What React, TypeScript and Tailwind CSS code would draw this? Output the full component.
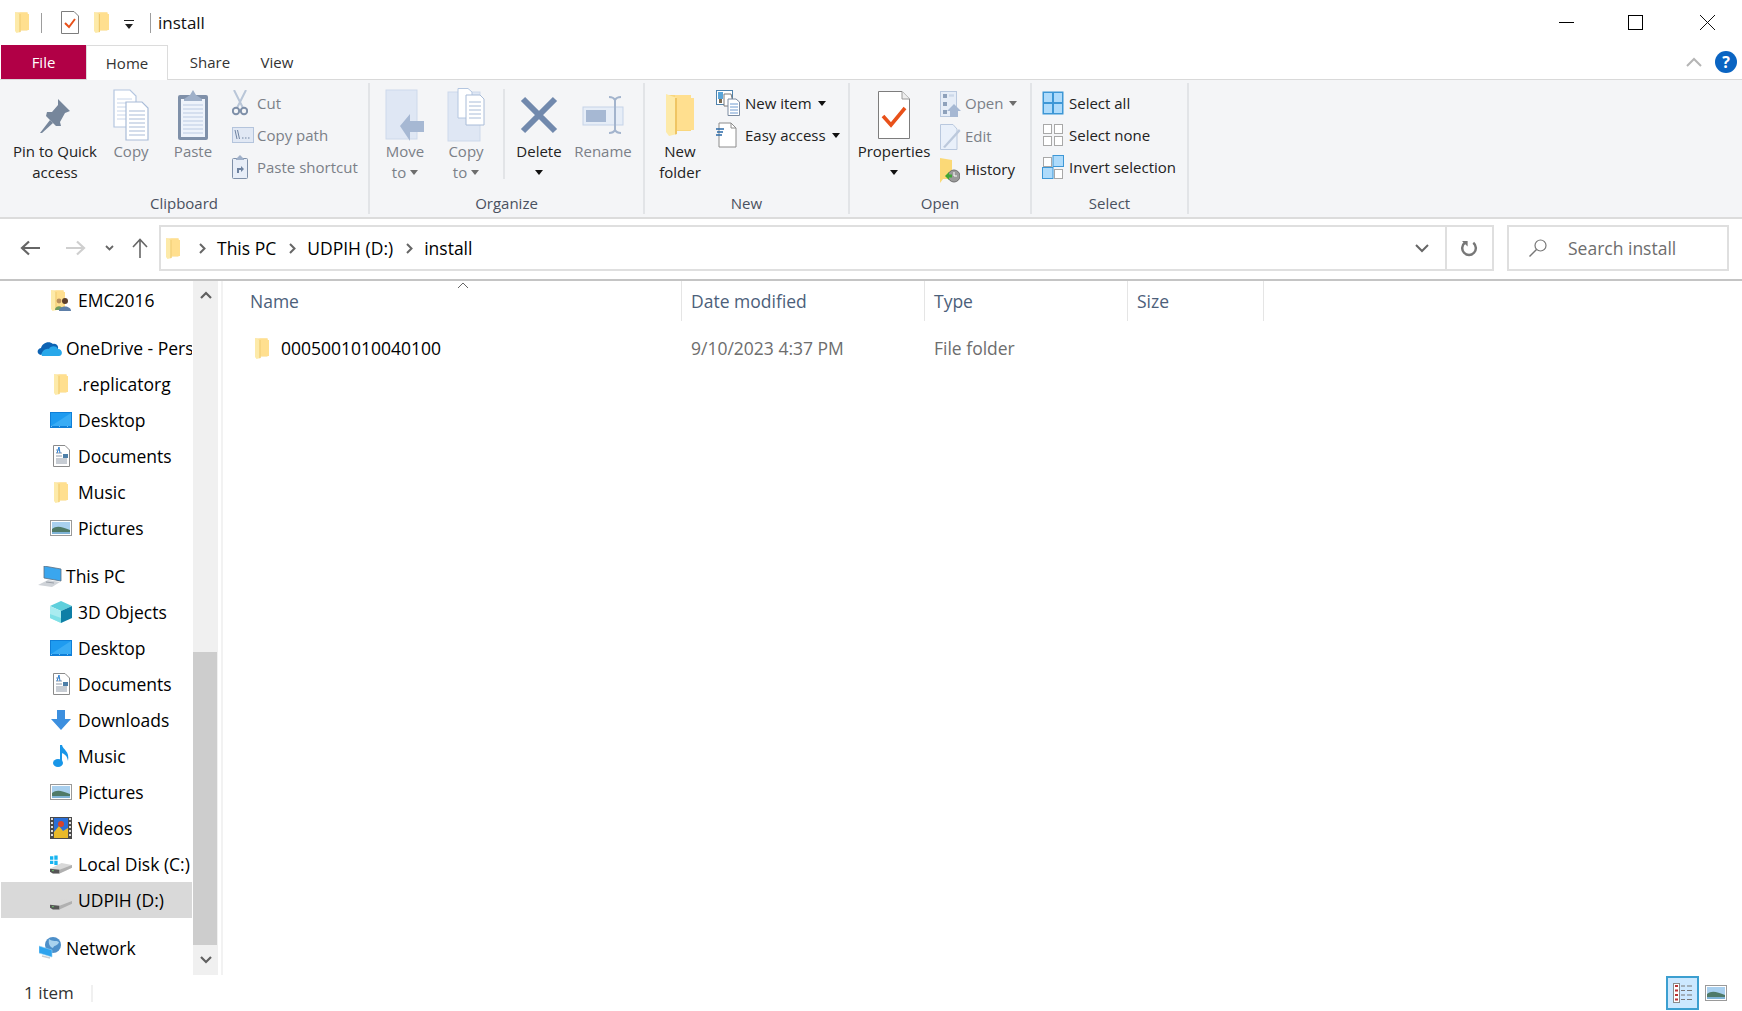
import type { ReactNode } from 'react';

const sans = "font-['Open_Sans',sans-serif]";

function Folder({ className = 'w-[14px] h-[21px]' }: { className?: string }) {
  return (
    <svg viewBox="0 0 28 42" className={className} preserveAspectRatio="none">
      <path d="M0 1 H25 V37 H7 L0 33 Z" fill="#f9d77e" />
      <path d="M9 1 H25 V4 H28 V36 H9 Z" fill="#ffdf8f" />
      <path d="M0 0 L11 4 V40 L3 42 L0 38 Z" fill="#fdeaa9" />
      <path d="M11 4 V40 L9 40.5 V4 Z" fill="#efc564" />
    </svg>
  );
}

function Caret({ dim = false }: { dim?: boolean }) {
  return (
    <svg viewBox="0 0 8 5" className="w-[8px] h-[5px] shrink-0">
      <path d="M0 0H8L4 5Z" fill={dim ? '#6d6d6d' : '#111'} />
    </svg>
  );
}

const PinIcon = () => (
  <svg viewBox="0 0 32 38" className="w-[32px] h-[38px]">
    <path d="M19 3 L31 15 L26 17 L21 26 L22 30 L17 30 L7 20 L8 16 L13 16 L19 9 Z" fill="#76869b" />
    <path d="M11 24 L1 37 L3 37 L14 27 Z" fill="#76869b" />
  </svg>
);

const CopyIcon = () => (
  <svg viewBox="0 0 36 52" className="w-[36px] h-[52px]">
    <path d="M1 1H17L23 7V38H1Z" fill="#fff" stroke="#b4c6e0" strokeWidth="1.2" />
    <path d="M4 10H19M4 14H19M4 18H19M4 22H19M4 26H19M4 30H19" stroke="#c9d6ea" strokeWidth="1" />
    <path d="M13 13H29L35 19V51H13Z" fill="#fff" stroke="#a9bcd8" strokeWidth="1.2" />
    <path d="M16 22H32M16 26H32M16 30H32M16 34H32M16 38H32M16 42H32M16 46H32" stroke="#a9bcd8" strokeWidth="1.1" />
  </svg>
);

const PasteIcon = () => (
  <svg viewBox="0 0 32 52" className="w-[32px] h-[52px]">
    <rect x="1" y="6" width="30" height="45" rx="2" fill="#7f90a9" />
    <rect x="4" y="10" width="24" height="38" fill="#eef3fb" />
    <path d="M6 16H26M6 20H26M6 24H26M6 28H26M6 32H26M6 36H26M6 40H26M6 44H26" stroke="#bccbe3" strokeWidth="1" />
    <path d="M7 10 L13 6 L16 1 L19 6 L25 10 V12 H7 Z" fill="#9fb0c9" />
  </svg>
);

const CutIcon = () => (
  <svg viewBox="0 0 16 26" className="w-[16px] h-[26px]">
    <path d="M2 0 L11 18 M14 0 L5 18" stroke="#b9c6d8" strokeWidth="2" />
    <circle cx="4" cy="21" r="3.2" fill="none" stroke="#7f90a9" strokeWidth="2" />
    <circle cx="12" cy="21" r="3.2" fill="none" stroke="#7f90a9" strokeWidth="2" />
  </svg>
);

const CopyPathIcon = () => (
  <svg viewBox="0 0 22 16" className="w-[22px] h-[16px]">
    <rect x="0.5" y="0.5" width="21" height="15" fill="#e1e8f4" stroke="#b4c4dc" />
    <path d="M3 3 L5 12 M5.5 3 L7.5 12" stroke="#6f83a1" strokeWidth="1" />
    <path d="M10 11H11.5M13 11H14.5M16 11H17.5" stroke="#6f83a1" strokeWidth="1" />
  </svg>
);

const PasteShortcutIcon = () => (
  <svg viewBox="0 0 16 24" className="w-[16px] h-[24px]">
    <rect x="0.5" y="3.5" width="15" height="20" rx="1" fill="#e8eef8" stroke="#7f90a9" />
    <path d="M4 4 L8 0 L12 4 V5 H4 Z" fill="#9fb0c9" />
    <path d="M5 18 V13 H9 V11 L12 14 L9 17 V15 H7 V18 Z" fill="#6f83a1" />
  </svg>
);

const MoveToIcon = () => (
  <svg viewBox="0 0 40 52" className="w-[40px] h-[52px]">
    <rect x="1" y="1" width="31" height="49" fill="#dfe7f4" stroke="#cdd9eb" />
    <path d="M15 37 L25 25 V32 H39 V43 H25 V52 Z" fill="#a6b8d3" />
  </svg>
);

const CopyToIcon = () => (
  <svg viewBox="0 0 38 54" className="w-[38px] h-[54px]">
    <rect x="1" y="4" width="32" height="49" fill="#dfe7f4" stroke="#cdd9eb" />
    <path d="M11 0.5H21L25 4V30H11Z" fill="#fff" stroke="#b4c6e0" />
    <path d="M19 7H33L37 11V37H19Z" fill="#fff" stroke="#a9bcd8" />
    <path d="M22 14H34M22 18H34M22 22H34M22 26H34M22 30H34" stroke="#a9bcd8" />
  </svg>
);

const DeleteIcon = () => (
  <svg viewBox="0 0 38 38" className="w-[38px] h-[38px]">
    <path d="M3 3 L35 35 M35 3 L3 35" stroke="#7189ad" strokeWidth="6" />
  </svg>
);

const RenameIcon = () => (
  <svg viewBox="0 0 42 38" className="w-[42px] h-[38px]">
    <rect x="1" y="11" width="40" height="18" fill="#e6edf7" stroke="#c5d3e8" />
    <rect x="4" y="14" width="20" height="12" fill="#a6b8d3" />
    <path d="M27 1 C30 1 32 2 33 4 C34 2 36 1 39 1 M33 4 V34 M27 37 C30 37 32 36 33 34 C34 36 36 37 39 37" stroke="#a3b4cd" strokeWidth="2" fill="none" />
  </svg>
);

const NewItemIcon = () => (
  <svg viewBox="0 0 24 26" className="w-[24px] h-[26px]">
    <rect x="0.5" y="0.5" width="16" height="14" fill="#fff" stroke="#4f83ad" />
    <rect x="2" y="2" width="5" height="7" fill="#5aa5d8" />
    <rect x="3" y="9" width="3" height="4" fill="#7a6a50" />
    <path d="M8 4H15L16 8V16H8Z" fill="#fff" stroke="#7a7a7a" />
    <path d="M12 9H20L23.5 12V25.5H12Z" fill="#fff" stroke="#7a8aa0" />
    <path d="M14 14H22M14 17H22M14 20H22M14 23H22" stroke="#6f9ad0" />
  </svg>
);

const EasyAccessIcon = () => (
  <svg viewBox="0 0 21 26" className="w-[21px] h-[26px]">
    <path d="M3 1H15L20 6V25H3Z" fill="#fff" stroke="#8c8c8c" />
    <path d="M15 1V6H20" fill="none" stroke="#8c8c8c" />
    <path d="M0 7H8M1 10H7M0 13H6" stroke="#2a6aa8" strokeWidth="1.4" />
  </svg>
);

const PropertiesIcon = () => (
  <svg viewBox="0 0 32 48" className="w-[32px] h-[48px]">
    <path d="M0.5 0.5H24L31.5 8V47.5H0.5Z" fill="#fff" stroke="#7d7d7d" />
    <path d="M24 0.5V8H31.5" fill="#eee" stroke="#9a9a9a" />
    <path d="M5 25 L13 34 L27 17" fill="none" stroke="#e8511a" strokeWidth="3.6" />
  </svg>
);

const OpenIcon = () => (
  <svg viewBox="0 0 21 26" className="w-[21px] h-[26px]">
    <rect x="0.5" y="0.5" width="16" height="25" fill="#e6edf7" stroke="#b9c8de" />
    <path d="M3 3H7V7H3ZM3 11H7V15H3ZM3 19H7V23H3Z" fill="#8ea1bb" />
    <path d="M9 4H14M9 5H14" stroke="#c3d1e4" />
    <path d="M14 13 L21 20 H18 V26 H10 V20 H7 Z" fill="#a6b8d3" />
  </svg>
);

const EditIcon = () => (
  <svg viewBox="0 0 21 26" className="w-[21px] h-[26px]">
    <path d="M0.5 0.5H13L17 5V25.5H0.5Z" fill="#e9f0fa" stroke="#b9c8de" />
    <path d="M3 23 L19 5 L20.5 7 L5 24 Z" fill="#bcc9dc" />
  </svg>
);

const HistoryIcon = () => (
  <svg viewBox="0 0 20 26" className="w-[20px] h-[26px]">
    <path d="M0 1 L12 3 V22 H3 L0 26 Z" fill="#fbd977" />
    <circle cx="14" cy="19" r="6" fill="#9a9a9a" stroke="#6f6f6f" />
    <path d="M14 15 V19 H17" stroke="#fff" strokeWidth="1" fill="none" />
    <path d="M5 19 L9 15 V17.5 H12 V20.5 H9 V23 Z" fill="#3fa535" />
  </svg>
);

const SelectAllIcon = () => (
  <svg viewBox="0 0 22 24" className="w-[22px] h-[24px]">
    <rect x="0.5" y="0.5" width="21" height="23" fill="#3d97d6" />
    <rect x="2" y="2" width="8" height="9" fill="#aedbfb" />
    <rect x="12" y="2" width="8" height="9" fill="#aedbfb" />
    <rect x="2" y="13" width="8" height="9" fill="#aedbfb" />
    <rect x="12" y="13" width="8" height="9" fill="#aedbfb" />
  </svg>
);

const SelectNoneIcon = () => (
  <svg viewBox="0 0 22 24" className="w-[22px] h-[24px]">
    <rect x="1.5" y="1.5" width="8" height="9" fill="#fff" stroke="#a8a8a8" />
    <rect x="12.5" y="1.5" width="8" height="9" fill="#fff" stroke="#a8a8a8" />
    <rect x="1.5" y="13.5" width="8" height="9" fill="#fff" stroke="#a8a8a8" />
    <rect x="12.5" y="13.5" width="8" height="9" fill="#fff" stroke="#a8a8a8" />
  </svg>
);

const InvertIcon = () => (
  <svg viewBox="0 0 22 24" className="w-[22px] h-[24px]">
    <rect x="1.5" y="2.5" width="8" height="9" fill="#fff" stroke="#a8a8a8" />
    <rect x="11" y="0.5" width="10.5" height="11" fill="#aedbfb" stroke="#3d97d6" />
    <rect x="0.5" y="12.5" width="10.5" height="11" fill="#aedbfb" stroke="#3d97d6" />
    <rect x="12.5" y="14.5" width="8" height="9" fill="#fff" stroke="#a8a8a8" />
  </svg>
);

const CloudIcon = () => (
  <svg viewBox="0 0 25 15" className="w-[25px] h-[15px]">
    <path d="M4 14 C0 14 -1 8 4 7 C5 2 12 -1 16 3 C18 2 22 4 21 8 H12 Z" fill="#0d63b3" />
    <path d="M5 15 H22 C26 15 26 8 21 8 C19 4 13 5 12 8 C8 7 3 12 5 15Z" fill="#28a8ea" />
  </svg>
);

const DesktopIcon = () => (
  <svg viewBox="0 0 22 16" className="w-[22px] h-[16px]">
    <rect width="22" height="16" fill="#0f7fd8" />
    <path d="M1 1H21V14L1 14Z" fill="#1e9bf0" />
    <path d="M1 14 L21 1 V14Z" fill="#39acf5" />
    <path d="M1 14.5H21" stroke="#cfe9fb" strokeWidth="0.6" strokeDasharray="1 7" />
  </svg>
);

const DocumentsIcon = () => (
  <svg viewBox="0 0 17 22" className="w-[17px] h-[22px]">
    <path d="M0.5 0.5H12L16.5 5V21.5H0.5Z" fill="#fff" stroke="#8a8a8a" />
    <path d="M3 5H6M3 8H9M11 10H14M3 11H9M3 14H14M3 16H14M3 18H14" stroke="#8f9aa8" strokeWidth="1" />
    <path d="M4 8 L6 2 L7 8" stroke="#2a7fd4" fill="none" />
    <rect x="10" y="9" width="5" height="4" fill="#4d7fa8" />
  </svg>
);

const PicturesIcon = () => (
  <svg viewBox="0 0 22 16" className="w-[22px] h-[16px]">
    <rect x="0.5" y="0.5" width="21" height="15" fill="#fff" stroke="#9a9a9a" />
    <rect x="2" y="2" width="18" height="12" fill="#a9d0ef" />
    <path d="M2 9 C7 5 12 7 20 10 V14 H2Z" fill="#4f7a68" />
    <path d="M2 12 H20 V14 H2Z" fill="#7fb3d6" />
  </svg>
);

const PeopleFolderIcon = () => (
  <div className="relative w-[20px] h-[21px]">
    <Folder className="w-[14px] h-[21px]" />
    <svg viewBox="0 0 20 21" className="w-[20px] h-[21px] absolute left-0 top-0">
      <circle cx="8" cy="11" r="2.4" fill="#b98f5e" />
      <path d="M4 20 C4 15 12 15 12 20Z" fill="#6f9a5f" />
      <circle cx="14" cy="11" r="3" fill="#5c3f2b" />
      <path d="M8 21 C8 15 20 15 20 21Z" fill="#5d7fa8" />
    </svg>
  </div>
);

const ThisPcIcon = () => (
  <svg viewBox="0 0 24 21" className="w-[24px] h-[21px]">
    <path d="M6 0 L23 3 V15 L6 12 Z" fill="#3aa6ee" stroke="#5d6e80" strokeWidth="0.8" />
    <path d="M0 19 L10 14 L22 16 L14 21 Z" fill="#cfd3d8" />
    <path d="M8 16 L16 17" stroke="#9aa0a8" />
  </svg>
);

const CubeIcon = () => (
  <svg viewBox="0 0 22 22" className="w-[22px] h-[22px]">
    <path d="M11 0 L22 5 L11 10 L0 5Z" fill="#5ecfdc" />
    <path d="M0 5 L11 10 V22 L0 17Z" fill="#a9ecf0" />
    <path d="M11 10 L22 5 V17 L11 22Z" fill="#0e7fa6" />
    <path d="M0 13 L11 17 V22 L0 17Z" fill="#7fe0e6" />
  </svg>
);

const DownloadsIcon = () => (
  <svg viewBox="0 0 20 20" className="w-[20px] h-[20px]">
    <path d="M6 0H14V9H20L10 20L0 9H6Z" fill="#3c8fdf" />
  </svg>
);

const MusicIcon = () => (
  <svg viewBox="0 0 17 22" className="w-[17px] h-[22px]">
    <ellipse cx="5" cy="18" rx="5" ry="4" fill="#1896e8" />
    <path d="M7 18 V0 H9 C10 5 17 6 15 16 C14 10 11 9 9 8 V18Z" fill="#1896e8" />
  </svg>
);

const VideosIcon = () => (
  <svg viewBox="0 0 22 22" className="w-[22px] h-[22px]">
    <rect width="22" height="22" fill="#4a4a4a" />
    <rect x="4" y="1" width="14" height="20" fill="#2a6fd8" />
    <path d="M4 15 L9 9 L13 14 L18 11 V21 H4Z" fill="#e8b92a" />
    <circle cx="11" cy="7" r="3" fill="#d8442a" />
    <path d="M1 2H3M1 6H3M1 10H3M1 14H3M1 18H3M19 2H21M19 6H21M19 10H21M19 14H21M19 18H21" stroke="#ddd" strokeWidth="2" />
  </svg>
);

const DriveIcon = ({ windows = false }: { windows?: boolean }) => (
  <svg viewBox="0 0 23 20" className="w-[23px] h-[20px]">
    {windows && <path d="M0 2H3.5V5.5H0ZM4.5 1H8V5.5H4.5ZM0 6.5H3.5V10H0ZM4.5 6.5H8V11H4.5Z" fill="#18b4f0" />}
    <path d="M0 15 L12 9 L23 11 V14 L10 20 H3 L0 18Z" fill="#d8d8d8" />
    <path d="M0 15 L10 16 V20 H3 L0 18Z" fill="#555" />
    <path d="M10 16 L23 11 V14 L10 20Z" fill="#b0b0b0" />
    <path d="M2 17H4" stroke="#6fce6f" strokeWidth="1" />
  </svg>
);

const NetworkIcon = () => (
  <svg viewBox="0 0 22 22" className="w-[22px] h-[22px]">
    <circle cx="14" cy="8" r="8" fill="#4d8fc9" />
    <path d="M10 2 C14 5 17 3 20 5 C19 9 15 8 14 11 C11 10 9 7 10 2Z" fill="#a8d2ee" />
    <path d="M0 9 L13 13 V20 L0 16 Z" fill="#2ea3ee" stroke="#8ed0f5" strokeWidth="0.6" />
    <path d="M3 19 L11 21" stroke="#c8ccd2" strokeWidth="1.6" />
  </svg>
);

function LargeButton({ icon, label, sub, width, ml = 0, dim = false, iconBox = 'h-[52px]' }: {
  icon: ReactNode; label: string; sub?: ReactNode; width: string; ml?: number; dim?: boolean; iconBox?: string;
}) {
  return (
    <div className={`flex flex-col items-center ${width} ${dim ? 'text-[#7b8088]' : 'text-[#222]'}`} style={{ marginLeft: ml }}>
      <div className={`flex items-center justify-center ${iconBox}`}>{icon}</div>
      <div className="h-[21px] leading-[21px] whitespace-nowrap">{label}</div>
      <div className="h-[21px] flex items-center justify-center gap-[4px] whitespace-nowrap">{sub}</div>
    </div>
  );
}

function SmallRow({ icon, label, dim = false, caret, gap = 'w-[25px]', h = 'h-[32px]' }: {
  icon: ReactNode; label: string; dim?: boolean; caret?: ReactNode; gap?: string; h?: string;
}) {
  return (
    <div className={`flex items-center ${h} whitespace-nowrap ${dim ? 'text-[#7b8088]' : 'text-[#222]'}`}>
      <div className={`${gap} flex items-center shrink-0`}>{icon}</div>
      <span>{label}</span>
      {caret && <span className="ml-[6px] flex items-center">{caret}</span>}
    </div>
  );
}

function RibbonGroup({ width, label, children }: { width: string; label: string; children: ReactNode }) {
  return (
    <div className={`${width} shrink-0 flex flex-col my-[3px] border-r-2 border-[#e2e4e7]`}>
      <div className="h-[110px] flex pt-[6px]">{children}</div>
      <div className="text-center text-[#4a5160] leading-[20px]">{label}</div>
    </div>
  );
}

function Ribbon() {
  return (
    <div className="h-[139px] bg-[#f4f5f7] border-b-2 border-[#dcdcdc] flex text-[15px] pl-0 shrink-0">
      <RibbonGroup width="w-[370px]" label="Clipboard">
        <LargeButton width="w-[90px]" ml={10} icon={<PinIcon />} label="Pin to Quick" sub="access" />
        <LargeButton width="w-[50px]" ml={6} dim icon={<CopyIcon />} label="Copy" />
        <LargeButton width="w-[50px]" ml={12} dim icon={<PasteIcon />} label="Paste" />
        <div className="ml-[14px] -mt-[2px]">
          <SmallRow dim icon={<CutIcon />} label="Cut" />
          <SmallRow dim icon={<CopyPathIcon />} label="Copy path" />
          <SmallRow dim icon={<PasteShortcutIcon />} label="Paste shortcut" />
        </div>
      </RibbonGroup>
      <RibbonGroup width="w-[275px]" label="Organize">
        <LargeButton width="w-[50px]" ml={10} dim icon={<MoveToIcon />} label="Move" sub={<>to <Caret dim /></>} />
        <LargeButton width="w-[50px]" ml={11} dim icon={<CopyToIcon />} label="Copy" sub={<>to <Caret dim /></>} />
        <div className="w-[2px] h-[90px] bg-[#e2e4e7] ml-[12px]" />
        <LargeButton width="w-[50px]" ml={9} icon={<DeleteIcon />} label="Delete" sub={<Caret />} />
        <LargeButton width="w-[60px]" ml={9} dim icon={<RenameIcon />} label="Rename" />
      </RibbonGroup>
      <RibbonGroup width="w-[205px]" label="New">
        <LargeButton width="w-[50px]" ml={10} icon={<Folder className="w-[28px] h-[42px]" />} label="New" sub="folder" />
        <div className="ml-[11px] -mt-[2px]">
          <SmallRow icon={<NewItemIcon />} gap="w-[29px]" label="New item" caret={<Caret />} />
          <SmallRow icon={<EasyAccessIcon />} gap="w-[29px]" label="Easy access" caret={<Caret />} />
        </div>
      </RibbonGroup>
      <RibbonGroup width="w-[182px]" label="Open">
        <LargeButton width="w-[76px]" ml={6} icon={<PropertiesIcon />} label="Properties" sub={<Caret />} />
        <div className="ml-[8px] -mt-[2px]">
          <SmallRow dim h="h-[33px]" icon={<OpenIcon />} label="Open" caret={<Caret dim />} />
          <SmallRow dim h="h-[33px]" icon={<EditIcon />} label="Edit" />
          <SmallRow h="h-[33px]" icon={<HistoryIcon />} label="History" />
        </div>
      </RibbonGroup>
      <RibbonGroup width="w-[157px]" label="Select">
        <div className="ml-[10px] -mt-[2px]">
          <SmallRow gap="w-[27px]" icon={<SelectAllIcon />} label="Select all" />
          <SmallRow gap="w-[27px]" icon={<SelectNoneIcon />} label="Select none" />
          <SmallRow gap="w-[27px]" icon={<InvertIcon />} label="Invert selection" />
        </div>
      </RibbonGroup>
    </div>
  );
}

function TitleBar() {
  return (
    <div className="h-[45px] flex items-center shrink-0">
      <div className="ml-[15px]"><Folder className="w-[14px] h-[21px]" /></div>
      <div className="w-px h-[20px] bg-[#9d9d9d] ml-[12px]" />
      <svg viewBox="0 0 18 23" className="w-[18px] h-[23px] ml-[19px]">
        <path d="M0.5 0.5H13L17.5 5V22.5H0.5Z" fill="#fff" stroke="#7d7d7d" />
        <path d="M4 12 L8 16 L14 8" fill="none" stroke="#e8511a" strokeWidth="2" />
      </svg>
      <div className="ml-[15px]"><Folder className="w-[15px] h-[21px]" /></div>
      <svg viewBox="0 0 10 9" className="w-[10px] h-[9px] ml-[15px] mt-[4px]">
        <path d="M0 0.5H10" stroke="#222" />
        <path d="M1 4H9L5 9Z" fill="#222" />
      </svg>
      <div className="w-px h-[20px] bg-[#9d9d9d] ml-[16px]" />
      <div className="ml-[7px] text-[17px] text-[#111] leading-none">install</div>
      <div className="ml-auto flex items-center">
        <div className="w-[15px] h-px bg-black mr-[54px]" />
        <div className="w-[15px] h-[15px] border border-black mr-[57px]" />
        <svg viewBox="0 0 15 15" className="w-[15px] h-[15px] mr-[27px]">
          <path d="M0 0 L15 15 M15 0 L0 15" stroke="#111" strokeWidth="1" />
        </svg>
      </div>
    </div>
  );
}

function Tabs() {
  return (
    <div className="h-[35px] flex text-[15px] border-b border-[#d9d9d9] shrink-0 relative">
      <div className="w-[85px] ml-px bg-[#b10046] text-white flex items-center justify-center">File</div>
      <div className="w-[82px] -mb-px bg-[#fff] border-x border-t border-[#dcdcdc] flex items-center justify-center text-[#333]">Home</div>
      <div className="w-[84px] flex items-center justify-center text-[#333]">Share</div>
      <div className="w-[50px] flex items-center justify-center text-[#333]">View</div>
      <div className="ml-auto flex items-center mr-[5px]">
        <svg viewBox="0 0 16 10" className="w-[16px] h-[10px] mr-[13px]">
          <path d="M1 9 L8 2 L15 9" fill="none" stroke="#b5b5b5" strokeWidth="2" />
        </svg>
        <div className="w-[22px] h-[22px] rounded-full bg-[#0a64c2] text-white font-bold text-[16px] leading-[22px] text-center">?</div>
      </div>
    </div>
  );
}

function Chev() {
  return (
    <svg viewBox="0 0 7 11" className="w-[7px] h-[11px]">
      <path d="M1 1 L5.5 5.5 L1 10" fill="none" stroke="#666" strokeWidth="2" />
    </svg>
  );
}

function AddressBar() {
  return (
    <div className="h-[62px] shrink-0 flex items-center border-b-2 border-[#c4c4c4] pb-[2px] text-[17.5px]">
      <svg viewBox="0 0 20 16" className="w-[20px] h-[16px] ml-[20px]">
        <path d="M20 8H3 M9 1.5 L2 8 L9 14.5" fill="none" stroke="#666" strokeWidth="2.2" />
      </svg>
      <svg viewBox="0 0 20 16" className="w-[20px] h-[16px] ml-[26px]">
        <path d="M0 8H17 M11 1.5 L18 8 L11 14.5" fill="none" stroke="#cfcfcf" strokeWidth="2.2" />
      </svg>
      <svg viewBox="0 0 9 6" className="w-[9px] h-[6px] ml-[19px]">
        <path d="M1 1 L4.5 4.5 L8 1" fill="none" stroke="#666" strokeWidth="1.8" />
      </svg>
      <svg viewBox="0 0 16 20" className="w-[16px] h-[20px] ml-[18px]">
        <path d="M8 20V2 M1 9 L8 1.5 L15 9" fill="none" stroke="#666" strokeWidth="1.6" />
      </svg>
      <div className="ml-[11px] w-[1335px] h-[46px] flex items-center border-2 border-[#dfdfdf]">
        <div className="ml-[5px]"><Folder className="w-[14px] h-[21px]" /></div>
        <div className="ml-[19px]"><Chev /></div>
        <span className="ml-[11px]">This PC</span>
        <div className="ml-[13px]"><Chev /></div>
        <span className="ml-[11px]">UDPIH (D:)</span>
        <div className="ml-[13px]"><Chev /></div>
        <span className="ml-[11px]">install</span>
        <svg viewBox="0 0 14 9" className="w-[14px] h-[9px] ml-auto mr-[16px]">
          <path d="M1 1 L7 7 L13 1" fill="none" stroke="#666" strokeWidth="2" />
        </svg>
        <div className="w-[47px] h-full border-l-2 border-[#dfdfdf] flex items-center justify-center">
          <svg viewBox="0 0 18 18" className="w-[17px] h-[17px]">
            <path d="M4 3 A7.2 7.2 0 1 0 13 3" fill="none" stroke="#777" strokeWidth="2.6" />
            <path d="M1 1 H7 V7Z" fill="#777" />
          </svg>
        </div>
      </div>
      <div className="ml-[13px] w-[222px] h-[46px] border-2 border-[#dfdfdf] flex items-center text-[#6d6d6d]">
        <svg viewBox="0 0 18 18" className="w-[18px] h-[18px] ml-[20px]">
          <circle cx="11.5" cy="6.5" r="5.5" fill="none" stroke="#777" strokeWidth="1.2" />
          <path d="M7.5 10.5 L0.5 17.5" stroke="#777" strokeWidth="1.4" />
        </svg>
        <span className="ml-[21px]">Search install</span>
      </div>
    </div>
  );
}

type NavItem = { icon: ReactNode; label: string; top?: boolean; selected?: boolean; gap?: boolean };

const navItems: NavItem[] = [
  { icon: <PeopleFolderIcon />, label: 'EMC2016' },
  { icon: <CloudIcon />, label: 'OneDrive - Personal', top: true, gap: true },
  { icon: <Folder />, label: '.replicatorg' },
  { icon: <DesktopIcon />, label: 'Desktop' },
  { icon: <DocumentsIcon />, label: 'Documents' },
  { icon: <Folder />, label: 'Music' },
  { icon: <PicturesIcon />, label: 'Pictures' },
  { icon: <ThisPcIcon />, label: 'This PC', top: true, gap: true },
  { icon: <CubeIcon />, label: '3D Objects' },
  { icon: <DesktopIcon />, label: 'Desktop' },
  { icon: <DocumentsIcon />, label: 'Documents' },
  { icon: <DownloadsIcon />, label: 'Downloads' },
  { icon: <MusicIcon />, label: 'Music' },
  { icon: <PicturesIcon />, label: 'Pictures' },
  { icon: <VideosIcon />, label: 'Videos' },
  { icon: <DriveIcon windows />, label: 'Local Disk (C:)' },
  { icon: <DriveIcon />, label: 'UDPIH (D:)', selected: true },
  { icon: <NetworkIcon />, label: 'Network', top: true, gap: true },
];

function Sidebar() {
  return (
    <div className="w-[191px] ml-px shrink-0 overflow-hidden pt-px text-[17.5px] text-black">
      {navItems.map((item, i) => (
        <div
          key={i}
          className={`h-[36px] flex items-center whitespace-nowrap ${item.gap ? 'mt-[12px]' : ''} ${item.selected ? 'bg-[#d9d9d9]' : ''}`}
        >
          <div className={`flex items-center justify-center shrink-0 ${item.top ? 'ml-[36px] w-[25px] mr-[4px]' : 'ml-[49px] w-[22px] mr-[6px]'}`}>
            {item.icon}
          </div>
          <span>{item.label}</span>
        </div>
      ))}
    </div>
  );
}

function Scrollbar() {
  return (
    <div className="w-[25px] ml-px shrink-0 bg-[#f0f0f0] flex flex-col">
      <div className="h-[28px] flex items-center justify-center">
        <svg viewBox="0 0 12 8" className="w-[12px] h-[8px]">
          <path d="M1 7 L6 2 L11 7" fill="none" stroke="#606060" strokeWidth="2.2" />
        </svg>
      </div>
      <div className="h-[343px]" />
      <div className="h-[293px] bg-[#cdcdcd] mr-px" />
      <div className="flex-1 flex items-center justify-center">
        <svg viewBox="0 0 12 8" className="w-[12px] h-[8px]">
          <path d="M1 1 L6 6 L11 1" fill="none" stroke="#606060" strokeWidth="2.2" />
        </svg>
      </div>
    </div>
  );
}

function FilePane() {
  return (
    <div className="flex-1 ml-[3px] border-l-2 border-[#f2f2f2] text-[17.5px] relative">
      <svg viewBox="0 0 12 7" className="absolute left-[234px] top-[1px] w-[12px] h-[7px]">
        <path d="M1 6 L6 1 L11 6" fill="none" stroke="#666" strokeWidth="1" />
      </svg>
      <div className="h-[40px] flex text-[#4c607a]">
        <div className="w-[459px] pl-[27px] border-r border-[#e5e5e5] flex items-center">Name</div>
        <div className="w-[243px] pl-[9px] border-r border-[#e5e5e5] flex items-center">Date modified</div>
        <div className="w-[203px] pl-[9px] border-r border-[#e5e5e5] flex items-center">Type</div>
        <div className="w-[136px] pl-[9px] border-r border-[#e5e5e5] flex items-center">Size</div>
      </div>
      <div className="h-[36px] mt-[9px] flex items-center text-[#6d6d6d]">
        <div className="w-[459px] pl-[32px] flex items-center text-black">
          <Folder />
          <span className="ml-[12px]">0005001010040100</span>
        </div>
        <div className="w-[243px] pl-[9px]">9/10/2023 4:37 PM</div>
        <div className="pl-[9px]">File folder</div>
      </div>
    </div>
  );
}

function StatusBar() {
  return (
    <div className="h-[36px] shrink-0 flex items-center text-[17px] text-[#333]">
      <span className="ml-[24px]">1 item</span>
      <div className="w-[2px] h-[17px] bg-[#f0f0f0] ml-[17px]" />
      <div className="ml-auto w-[33px] h-[34px] bg-[#cce8ff] border-2 border-[#3c9fd0] flex items-center justify-center">
        <svg viewBox="0 0 20 20" className="w-[20px] h-[20px]">
          <rect x="0.5" y="0.5" width="6" height="19" fill="#fff" stroke="#8a8a8a" />
          <path d="M2 3H5M2 7.5H5M2 12H5M2 16.5H5" stroke="#b33" strokeWidth="2" />
          <path d="M8 3H12M14 3H19M8 7.5H12M14 7.5H19M8 12H12M14 12H19M8 16.5H12M14 16.5H19" stroke="#777" strokeWidth="1.2" />
        </svg>
      </div>
      <div className="ml-[6px] mr-[15px]"><PicturesIcon /></div>
    </div>
  );
}

export default function App() {
  return (
    <div className={`w-[1742px] h-[1011px] bg-white flex flex-col overflow-hidden ${sans}`}>
      <TitleBar />
      <Tabs />
      <Ribbon />
      <AddressBar />
      <div className="flex-1 flex min-h-0">
        <Sidebar />
        <Scrollbar />
        <FilePane />
      </div>
      <StatusBar />
    </div>
  );
}
